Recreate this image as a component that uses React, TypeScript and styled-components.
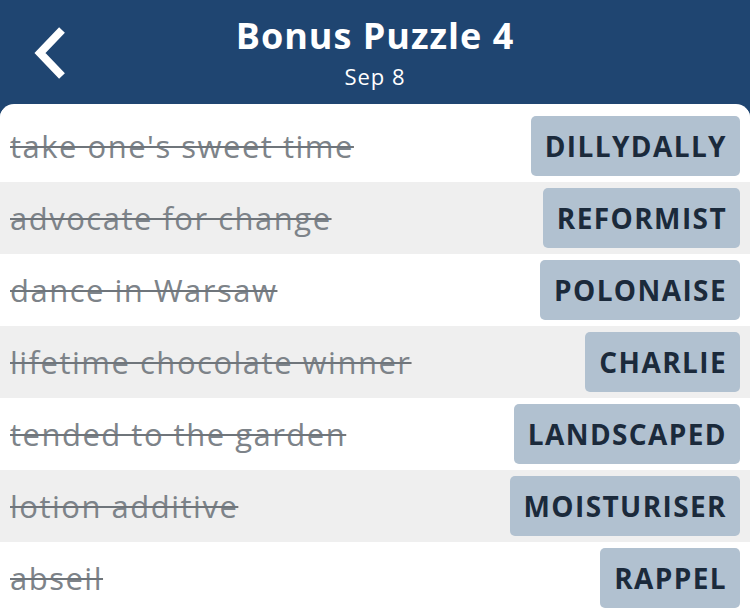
import React from "react";
import styled, { createGlobalStyle } from "styled-components";

const Global = createGlobalStyle`
  html, body { margin: 0; padding: 0; background: #1f4571; }
  body { font-family: "Open Sans", Lato, sans-serif; width: 750px; height: 610px; overflow: hidden; }
`;

const Page = styled.div`
  width: 750px;
  height: 610px;
  display: flex;
  flex-direction: column;
  background: #1f4571;
`;

const Header = styled.header`
  position: relative;
  height: 104px;
  display: flex;
  flex-direction: column;
  align-items: center;
  color: #fff;
`;

const BackButton = styled.button`
  position: absolute;
  left: 28px;
  top: 22px;
  width: 46px;
  height: 62px;
  padding: 0;
  border: 0;
  background: transparent;
  display: block;
`;

const Title = styled.h1`
  margin: 14px 0 0;
  font-size: 36px;
  letter-spacing: 1px;
  font-weight: 700;
  line-height: 44px;
`;

const Subtitle = styled.div`
  font-size: 22px;
  letter-spacing: 1px;
  line-height: 26px;
  margin-top: 5px;
`;

const Card = styled.div`
  flex: 1;
  background: #fff;
  border-radius: 14px 14px 0 0;
  padding-top: 6px;
  display: flex;
  flex-direction: column;
  overflow: hidden;
`;

const Row = styled.div<{ $alt: boolean }>`
  height: 72px;
  flex-shrink: 0;
  display: flex;
  align-items: center;
  justify-content: space-between;
  padding: 0 10px 0 10px;
  box-sizing: border-box;
  background: ${(p) => (p.$alt ? "#efefef" : "#fff")};
`;

const Clue = styled.span`
  font-size: 31px;
  letter-spacing: 1.5px;
  color: #7d8389;
  text-decoration: line-through;
  text-decoration-color: #6f757b;
  text-decoration-thickness: 2px;
`;

const Answer = styled.span`
  height: 60px;
  box-sizing: border-box;
  padding: 0 13px 0 14px;
  display: flex;
  align-items: center;
  background: #b1c1d0;
  border-radius: 5px;
  color: #1b2a3b;
  font-size: 28px;
  letter-spacing: 1.4px;
  font-weight: 700;
`;

const rows = [
  ["take one's sweet time", "DILLYDALLY"],
  ["advocate for change", "REFORMIST"],
  ["dance in Warsaw", "POLONAISE"],
  ["lifetime chocolate winner", "CHARLIE"],
  ["tended to the garden", "LANDSCAPED"],
  ["lotion additive", "MOISTURISER"],
  ["abseil", "RAPPEL"],
];

export default function App() {
  return (
    <Page>
      <Global />
      <Header>
        <BackButton aria-label="Back">
          <svg width="46" height="62" viewBox="0 0 46 62">
            <path d="M34 8 L12 31 L34 54" fill="none" stroke="#fff" strokeWidth="8" strokeLinecap="butt" strokeLinejoin="miter" />
          </svg>
        </BackButton>
        <Title>Bonus Puzzle 4</Title>
        <Subtitle>Sep 8</Subtitle>
      </Header>
      <Card>
        {rows.map(([clue, answer], i) => (
          <Row key={answer} $alt={i % 2 === 1}>
            <Clue>{clue}</Clue>
            <Answer>{answer}</Answer>
          </Row>
        ))}
      </Card>
    </Page>
  );
}
